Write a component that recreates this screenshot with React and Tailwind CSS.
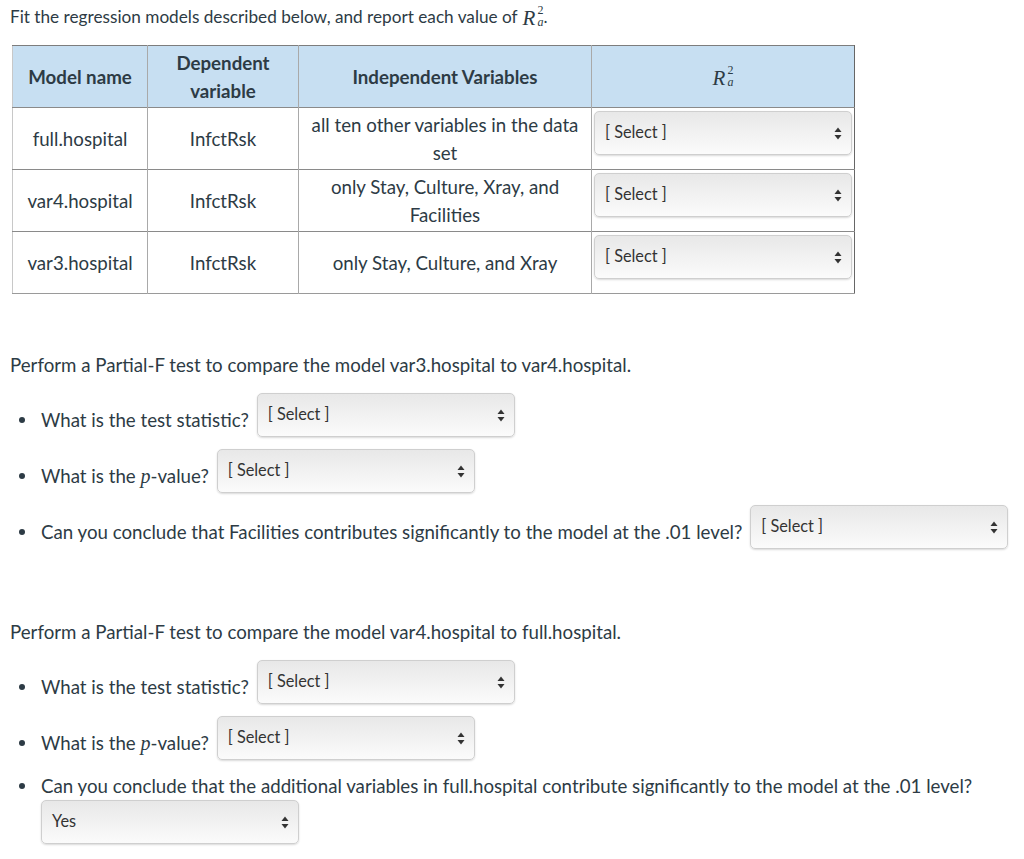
import React from "react";

const Chevron = () => (
  <svg width="8" height="13" viewBox="0 0 8 13" className="shrink-0">
    <path d="M4 0.5 L7.5 5 L0.5 5 Z" fill="#333" />
    <path d="M4 12.5 L7.5 8 L0.5 8 Z" fill="#333" />
  </svg>
);

const Select = ({ value = "[ Select ]", className = "" }) => (
  <div
    className={`h-[44px] w-[258px] shrink-0 rounded-[5px] border border-[#cfcfcf] bg-gradient-to-b from-[#e8e8e8] to-[#fbfbfb] shadow-[0_1px_2px_rgba(0,0,0,0.15)] flex items-center justify-between pl-[10px] pr-[9px] ${className}`}
  >
    <span className="text-[16.3px] text-[#333] leading-none -mt-[2px]">{value}</span>
    <Chevron />
  </div>
);

// R with stacked ² and subscript a
const Ra = () => (
  <span className="inline-flex items-start font-['Liberation_Serif',serif] italic text-[21px] leading-[21px] font-normal">
    <span className="pr-[2px]">R</span>
    <span className="inline-flex flex-col text-[12px] leading-[12px] not-italic -mt-[4px]">
      <span>2</span>
      <span className="italic">a</span>
    </span>
  </span>
);

const P = () => (
  <span className="font-['Liberation_Serif',serif] italic text-[20px]">p</span>
);

const Bullet = () => (
  <span className="w-[6px] h-[6px] rounded-full bg-[#2d3b45] ml-[19px] mr-[16px] shrink-0" />
);

const QuestionRow = ({ children, className = "" }) => (
  <div className={`flex items-start ${className}`}>
    <div className="flex items-center h-[24px] mt-[15px] whitespace-nowrap">
      <Bullet />
      <span>{children}</span>
    </div>
    <Select className="ml-[8px]" />
  </div>
);

const rows = [
  { name: "full.hospital", dep: "InfctRsk", ind: "all ten other variables in the data set" },
  { name: "var4.hospital", dep: "InfctRsk", ind: "only Stay, Culture, Xray, and Facilities" },
  { name: "var3.hospital", dep: "InfctRsk", ind: "only Stay, Culture, and Xray" },
];

export default function App() {
  return (
    <div className="bg-white w-[1024px] h-[859px] overflow-hidden font-['Lato','Open_Sans',sans-serif] text-[18.7px] leading-[24px] text-[#2d3b45]">
      <p className="pt-[5px] pl-[10px] flex items-center gap-[5px] text-[17.2px]">
        <span>Fit the regression models described below, and report each value of</span>
        <span className="flex items-end">
          <Ra />
          <span>.</span>
        </span>
      </p>

      <table className="mt-[16px] ml-[12px] w-[842px] border-collapse table-fixed border-t border-t-[#7d7d7d] border-l border-l-[#c8c8c8] border-r border-r-[#666] border-b border-b-[#9a9a9a]">
        <colgroup>
          <col className="w-[135px]" />
          <col className="w-[151px]" />
          <col className="w-[293px]" />
          <col className="w-[263px]" />
        </colgroup>
        <thead>
          <tr className="h-[62px] bg-[#c7dff2] font-bold">
            <th className="border-r border-[#a9a9a9] text-center px-[8px] leading-[28px]">Model name</th>
            <th className="border-r border-[#a9a9a9] text-center px-[8px] leading-[28px]">Dependent variable</th>
            <th className="border-r border-[#a9a9a9] text-center px-[8px] leading-[28px]">Independent Variables</th>
            <th className="text-center">
              <span className="inline-block mt-[2px]">
                <Ra />
              </span>
            </th>
          </tr>
        </thead>
        <tbody>
          {rows.map((r) => (
            <tr key={r.name} className="h-[62px] border-t border-[#8a8a8a]">
              <td className="border-r border-[#a9a9a9] text-center align-middle">{r.name}</td>
              <td className="border-r border-[#a9a9a9] text-center align-middle">{r.dep}</td>
              <td className="border-r border-[#a9a9a9] text-center align-middle px-[10px] leading-[28px]">{r.ind}</td>
              <td className="align-top pt-[3px] pl-[2px] pb-[3px]">
                <Select className="w-[256px]" />
              </td>
            </tr>
          ))}
        </tbody>
      </table>

      <p className="mt-[59px] pl-[10px]">Perform a Partial-F test to compare the model var3.hospital to var4.hospital.</p>

      <QuestionRow className="mt-[16px]">What is the test statistic?</QuestionRow>
      <QuestionRow className="mt-[12px]">
        What is the <P />-value?
      </QuestionRow>
      <QuestionRow className="mt-[12px]">
        Can you conclude that Facilities contributes significantly to the model at the .01 level?
      </QuestionRow>

      <p className="mt-[71px] pl-[10px]">Perform a Partial-F test to compare the model var4.hospital to full.hospital.</p>

      <QuestionRow className="mt-[16px]">What is the test statistic?</QuestionRow>
      <QuestionRow className="mt-[12px]">
        What is the <P />-value?
      </QuestionRow>

      <div className="mt-[14px] flex items-center h-[24px] whitespace-nowrap">
        <Bullet />
        <span>Can you conclude that the additional variables in full.hospital contribute significantly to the model at the .01 level?</span>
      </div>
      <Select value="Yes" className="mt-[2px] ml-[41px] w-[256px] h-[43px]" />
    </div>
  );
}
